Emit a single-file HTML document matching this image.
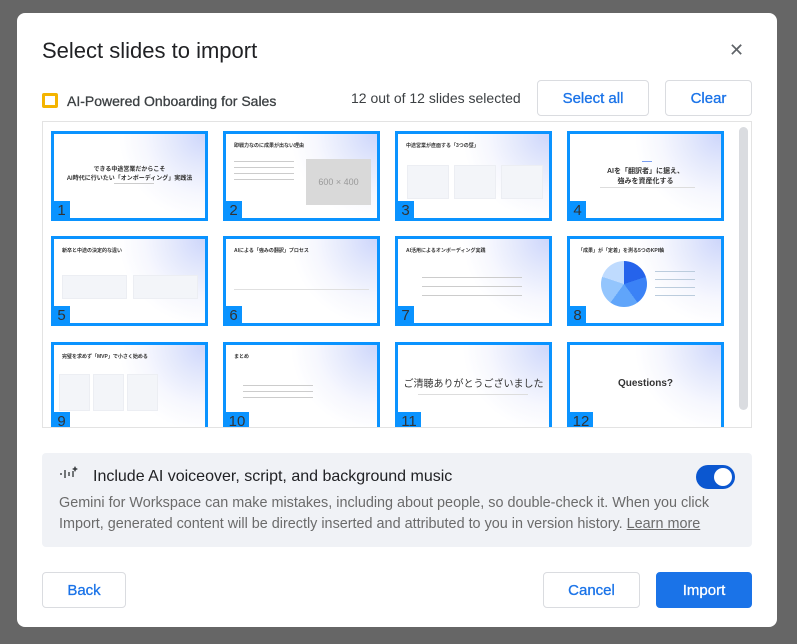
<!DOCTYPE html>
<html><head><meta charset="utf-8"><style>
*{box-sizing:border-box;margin:0;padding:0}
body{width:797px;height:644px;background:#666;font-family:"Liberation Sans","Noto Sans CJK JP",sans-serif;position:relative;overflow:hidden}
.dlg{position:absolute;left:17px;top:13px;width:760px;height:614px;background:#fff;border-radius:8px}
.a{position:absolute}
.btn{position:absolute;border:1px solid #dadce0;border-radius:4px;color:#1a73e8;font-size:15px;display:flex;align-items:center;justify-content:center;background:#fff;-webkit-text-stroke:0.3px}
.grid{position:absolute;left:42px;top:121px;width:710px;height:307px;border:1px solid #e3e3e3;overflow:hidden}
.t{position:absolute;width:157px;height:90px;border:3px solid #0a93ff;background:radial-gradient(circle at 100% 0%,#cdd6fb 0,#e3e8fc 18%,#f6f7fe 35%,#fff 50%);overflow:hidden}
.n{position:absolute;left:-1px;bottom:-1px;width:17px;height:18px;background:#0a93ff;color:#333;font-size:15px;line-height:19px;text-align:center}
.tt{position:absolute;left:8px;top:8px;font-size:5px;color:#333;font-weight:bold}
.c{position:absolute;left:0;right:0;text-align:center;color:#333;font-weight:bold}
.bx{position:absolute;background:#f3f5f9;border:1px solid #eceef3}
.ln{position:absolute;height:1px;background:#ccc}
</style></head><body>
<div class="dlg"></div>
<div class="a" style="left:42px;top:38px;font-size:22px;color:#202124">Select slides to import</div>
<div class="a" style="left:729px;top:40px;font-size:18px;color:#5f6368">✕</div>
<div class="a" style="left:42px;top:93px;width:16px;height:15px;border:3px solid #f4b400;border-radius:2px"></div>
<div class="a" style="left:67px;top:93px;font-size:14px;color:#3c4043;-webkit-text-stroke:0.3px">AI-Powered Onboarding for Sales</div>
<div class="a" style="left:351px;top:90px;font-size:14px;color:#3c4043">12 out of 12 slides selected</div>
<div class="btn" style="left:537px;top:80px;width:112px;height:36px">Select all</div>
<div class="btn" style="left:665px;top:80px;width:87px;height:36px">Clear</div>
<div class="grid">
 <div class="a" style="left:696px;top:5px;width:9px;height:283px;background:#dadce0;border-radius:5px"></div>
<div class="t" style="left:8px;top:9px"><div class="c" style="top:30px;font-size:6px">できる中途営業だからこそ</div><div class="c" style="top:39px;font-size:6px">AI時代に行いたい「オンボーディング」実践法</div><div class="ln" style="left:60px;width:40px;top:49px"></div><div class="n">1</div></div>
<div class="t" style="left:180px;top:9px"><div class="tt">即戦力なのに成果が出ない理由</div><div class="ln" style="left:8px;width:60px;top:27px"></div><div class="ln" style="left:8px;width:60px;top:33px"></div><div class="ln" style="left:8px;width:60px;top:39px"></div><div class="ln" style="left:8px;width:60px;top:45px"></div><div class="a" style="left:80px;top:25px;width:65px;height:46px;background:#d9d9d9;color:#999;font-size:9px;text-align:center;line-height:46px">600 × 400</div><div class="n">2</div></div>
<div class="t" style="left:352px;top:9px"><div class="tt">中途営業が直面する「3つの壁」</div><div class="bx" style="left:9px;top:31px;width:42px;height:34px"></div><div class="bx" style="left:56px;top:31px;width:42px;height:34px"></div><div class="bx" style="left:103px;top:31px;width:42px;height:34px"></div><div class="n">3</div></div>
<div class="t" style="left:524px;top:9px"><div class="ln" style="left:72px;width:10px;top:27px;background:#7a9ef0"></div><div class="c" style="top:32px;font-size:7px">AIを「翻訳者」に据え、</div><div class="c" style="top:42px;font-size:7px">強みを資産化する</div><div class="ln" style="left:30px;width:95px;top:53px;background:#ddd"></div><div class="n">4</div></div>
<div class="t" style="left:8px;top:114px"><div class="tt">新卒と中途の決定的な違い</div><div class="bx" style="left:8px;top:36px;width:65px;height:24px"></div><div class="bx" style="left:79px;top:36px;width:65px;height:24px"></div><div class="n">5</div></div>
<div class="t" style="left:180px;top:114px"><div class="tt">AIによる「強みの翻訳」プロセス</div><div class="ln" style="left:8px;width:135px;top:50px;background:#e0e0e0"></div><div class="n">6</div></div>
<div class="t" style="left:352px;top:114px"><div class="tt">AI活用によるオンボーディング実践</div><div class="ln" style="left:24px;width:100px;top:38px"></div><div class="ln" style="left:24px;width:100px;top:47px"></div><div class="ln" style="left:24px;width:100px;top:56px"></div><div class="n">7</div></div>
<div class="t" style="left:524px;top:114px"><div class="tt">「成果」が「定着」を測る5つのKPI軸</div><div class="a" style="left:31px;top:22px;width:46px;height:46px;border-radius:50%;background:conic-gradient(#2563eb 0 20%,#3b82f6 20% 40%,#60a5fa 40% 60%,#93c5fd 60% 80%,#bfdbfe 80%)"></div><div class="ln" style="left:85px;width:40px;top:32px;background:#bcd"></div><div class="ln" style="left:85px;width:40px;top:40px;background:#bcd"></div><div class="ln" style="left:85px;width:40px;top:48px;background:#bcd"></div><div class="ln" style="left:85px;width:40px;top:56px;background:#bcd"></div><div class="n">8</div></div>
<div class="t" style="left:8px;top:220px"><div class="tt">完璧を求めず「MVP」で小さく始める</div><div class="bx" style="left:5px;top:29px;width:31px;height:37px"></div><div class="bx" style="left:39px;top:29px;width:31px;height:37px"></div><div class="bx" style="left:73px;top:29px;width:31px;height:37px"></div><div class="n">9</div></div>
<div class="t" style="left:180px;top:220px"><div class="tt">まとめ</div><div class="ln" style="left:17px;width:70px;top:40px"></div><div class="ln" style="left:17px;width:70px;top:46px"></div><div class="ln" style="left:17px;width:70px;top:52px"></div><div class="n" style="width:24px">10</div></div>
<div class="t" style="left:352px;top:220px"><div class="c" style="top:30px;font-size:10px;font-weight:normal">ご清聴ありがとうございました</div><div class="ln" style="left:20px;width:110px;top:49px;background:#ddd"></div><div class="n" style="width:24px">11</div></div>
<div class="t" style="left:524px;top:220px"><div class="c" style="top:33px;font-size:10px">Questions?</div><div class="n" style="width:24px">12</div></div>
</div>
<div class="a" style="left:42px;top:453px;width:710px;height:94px;background:#f0f2f6;border-radius:4px"></div>
<svg class="a" style="left:59px;top:466px" width="20" height="16" viewBox="0 0 20 16"><g stroke="#3c4043" stroke-width="1.4"><line x1="2" y1="7" x2="2" y2="9"/><line x1="6" y1="4" x2="6" y2="12"/><line x1="10" y1="6" x2="10" y2="10"/><line x1="14" y1="5" x2="14" y2="11"/></g><path d="M16 0l1 2 2 1-2 1-1 2-1-2-2-1 2-1z" fill="#3c4043"/></svg>
<div class="a" style="left:93px;top:468px;font-size:16px;color:#202124">Include AI voiceover, script, and background music</div>
<div class="a" style="left:696px;top:465px;width:39px;height:24px;background:#0b57d0;border-radius:12px"><div class="a" style="right:3px;top:3px;width:18px;height:18px;background:#fff;border-radius:50%"></div></div>
<div class="a" style="left:59px;top:493px;width:670px;font-size:14.4px;line-height:21px;color:#6b6b6b">Gemini for Workspace can make mistakes, including about people, so double-check it. When you click Import, generated content will be directly inserted and attributed to you in version history. <u>Learn more</u></div>
<div class="btn" style="left:42px;top:572px;width:84px;height:36px">Back</div>
<div class="btn" style="left:543px;top:572px;width:97px;height:36px">Cancel</div>
<div class="btn" style="left:656px;top:572px;width:96px;height:36px;background:#1a73e8;border-color:#1a73e8;color:#fff">Import</div>
</body></html>
